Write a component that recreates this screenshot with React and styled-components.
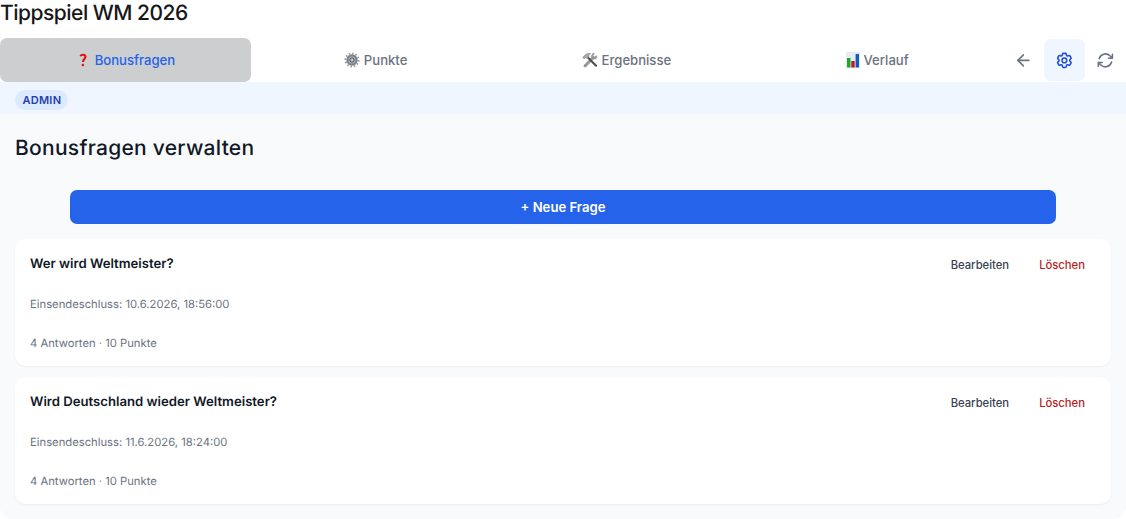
import React from "react";
import styled, { createGlobalStyle } from "styled-components";
import { ArrowLeft } from "lucide-react";
import { HiOutlineCog6Tooth, HiOutlineArrowPath } from "react-icons/hi2";

const GlobalStyle = createGlobalStyle`
  *, *::before, *::after { box-sizing: border-box; }
  body {
    margin: 0;
    background: #fff;
    color: #111827;
    font-family: Inter, "Liberation Sans", sans-serif;
    text-rendering: geometricPrecision;
  }
  h1, h2, h3, p { margin: 0; }
  button { font-family: inherit; border: 0; background: none; padding: 0; }
`;

const Page = styled.div`
  display: flex;
  flex-direction: column;
  height: 519px;
  overflow: hidden;
`;

const AppTitle = styled.h1`
  height: 38px;
  font-size: 21px;
  line-height: 27px;
  font-weight: 500;
  letter-spacing: -0.5px;
  color: #171717;
`;

const Nav = styled.nav`
  display: grid;
  grid-template-columns: repeat(4, minmax(0, 1fr)) repeat(3, 41px);
  align-items: center;
  height: 44px;
`;

const Tab = styled.button`
  height: 44px;
  display: flex;
  align-items: center;
  justify-content: center;
  gap: ${(p) => p.$gap || 4}px;
  padding: 0 ${(p) => (p.$active ? 0 : 1)}px 0 ${(p) => (p.$active ? 3 : 0)}px;
  border-radius: 7px;
  font-size: 13.125px;
  font-weight: 500;
  color: ${(p) => (p.$active ? "#2563eb" : "#6b7280")};
  background: ${(p) => (p.$active ? "#cdcecf" : "transparent")};
`;

const IconButton = styled.button`
  height: 42px;
  display: flex;
  align-items: center;
  justify-content: center;
  padding-right: 1px;
  border-radius: 7px;
  color: ${(p) => (p.$active ? "#1d4ed8" : "#6b7280")};
  background: ${(p) => (p.$active ? "#eff6ff" : "transparent")};
`;

const AdminBar = styled.div`
  display: flex;
  align-items: center;
  height: 32px;
  padding: 4px 15px 0;
  background: #eff6ff;
`;

const Badge = styled.span`
  height: 20px;
  padding: 0 7px 0 7.5px;
  border-radius: 10px;
  background: #dbeafe;
  color: #1e40af;
  font-size: 11px;
  line-height: 20px;
  font-weight: 600;
  letter-spacing: 0.25px;
`;

const Content = styled.main`
  flex: 1;
  display: flex;
  flex-direction: column;
  padding: 20px 15px 15px;
  background: #f9fafb;
  border-radius: 0 0 12px 12px;
`;

const Heading = styled.h2`
  font-size: 21px;
  line-height: 30px;
  font-weight: 500;
  letter-spacing: 0.27px;
`;

const PrimaryButton = styled.button`
  height: 34px;
  margin: 26px 55px 15px;
  border-radius: 7px;
  background: #2563eb;
  color: #fff;
  font-size: 13.125px;
  font-weight: 600;
`;

const CardList = styled.div`
  display: flex;
  flex-direction: column;
  gap: 11px;
`;

const Card = styled.article`
  display: flex;
  justify-content: space-between;
  height: 127px;
  padding: 15px;
  border-radius: 11px;
  background: #fff;
  box-shadow: 0 1px 2px rgba(0, 0, 0, 0.05);
`;

const Question = styled.h3`
  font-size: 13.15px;
  line-height: 20px;
  font-weight: 600;
`;

const Meta = styled.p`
  margin-top: ${(p) => p.$top}px;
  font-size: 11.25px;
  line-height: 16px;
  color: #6b7280;
`;

const Actions = styled.div`
  display: flex;
  align-items: center;
  gap: 30px;
  height: 22px;
  padding-right: 11px;
`;

const TextButton = styled.button`
  font-size: 11.25px;
  font-weight: 500;
  color: ${(p) => (p.$danger ? "#b91c1c" : "#374151")};
`;

const QuestionMark = () => (
  <svg width="8" height="14" viewBox="0 0 8 14">
    <path d="M1.5 3.3C2 1.3 6.4.9 6.4 3.8 6.4 6.2 4.1 6 4 9" fill="none" stroke="#e11212" strokeWidth="2.1" />
    <circle cx="3.9" cy="12" r="1.25" fill="#e11212" />
  </svg>
);

const GearEmoji = () => (
  <svg width="16" height="16" viewBox="0 0 16 16">
    <circle cx="8" cy="8" r="6.6" fill="none" stroke="#989da3" strokeWidth="2" strokeDasharray="1.5 1.95" />
    <circle cx="8" cy="8" r="4.6" fill="#b8bec5" stroke="#7d838b" strokeWidth="2.2" />
    <circle cx="8" cy="8" r="2.2" fill="#aeb6be" stroke="#454a52" />
    <path d="M7.4 7l1.4 1-1.2 1" stroke="#e8edf1" fill="none" strokeWidth=".8" />
  </svg>
);

const ToolsEmoji = () => (
  <svg width="16" height="16" viewBox="0 0 16 16">
    <path d="M12.4 1.2 11 3.6l1.3 1.3 2.5-1.2c.5 2.2-1.1 3.8-3.2 3.3L4 14.8c-1.3 1-2.9-.4-1.9-1.7L9.7 5.6c-.8-2.5.7-4.4 2.7-4.4Z" fill="#969a9e" stroke="#6f7478" strokeWidth=".4" />
    <path d="m6.1 5.7 8 8" stroke="#514b49" strokeWidth="2.1" strokeLinecap="round" />
    <path d="M.7 5.4 3 3C4.6 1.3 6.6 1 8.8 1.8 7.1 2 6.4 3 7.2 4.2L5 6.4 3.9 5.2 2.2 6.9Z" fill="#a3a8ab" stroke="#73787b" strokeWidth=".5" />
  </svg>
);

const ChartEmoji = () => (
  <svg width="14" height="16" viewBox="0 0 14 16">
    <path d="M.5.5h13v15H.5z" fill="#e3edf3" stroke="#d1dfe8" strokeWidth=".5" />
    <path d="M1 6h3.5v9.5H1z" fill="#16ae24" />
    <path d="M5.3 9h3.4v6.5H5.3z" fill="#c51622" />
    <path d="M9.6 2h3.4v13.5H9.6z" fill="#145bc0" />
  </svg>
);

const questions = [
  { title: "Wer wird Weltmeister?", deadline: "10.6.2026, 18:56:00" },
  { title: "Wird Deutschland wieder Weltmeister?", deadline: "11.6.2026, 18:24:00" },
];

export default function App() {
  return (
    <Page>
      <GlobalStyle />
      <AppTitle>Tippspiel WM 2026</AppTitle>
      <Nav>
        <Tab $active $gap={8}><QuestionMark />Bonusfragen</Tab>
        <Tab><GearEmoji />Punkte</Tab>
        <Tab><ToolsEmoji />Ergebnisse</Tab>
        <Tab><ChartEmoji />Verlauf</Tab>
        <IconButton aria-label="Zurück"><ArrowLeft size={18.75} strokeWidth={2} /></IconButton>
        <IconButton $active aria-label="Verwaltung"><HiOutlineCog6Tooth size={18.75} strokeWidth={2} /></IconButton>
        <IconButton aria-label="Aktualisieren"><HiOutlineArrowPath size={18.75} strokeWidth={2} /></IconButton>
      </Nav>
      <AdminBar><Badge>ADMIN</Badge></AdminBar>
      <Content>
        <Heading>Bonusfragen verwalten</Heading>
        <PrimaryButton>+ Neue Frage</PrimaryButton>
        <CardList>
          {questions.map((q) => (
            <Card key={q.title}>
              <div>
                <Question>{q.title}</Question>
                <Meta $top={22}>Einsendeschluss: {q.deadline}</Meta>
                <Meta $top={23}>4 Antworten · 10 Punkte</Meta>
              </div>
              <Actions>
                <TextButton>Bearbeiten</TextButton>
                <TextButton $danger>Löschen</TextButton>
              </Actions>
            </Card>
          ))}
        </CardList>
      </Content>
    </Page>
  );
}
